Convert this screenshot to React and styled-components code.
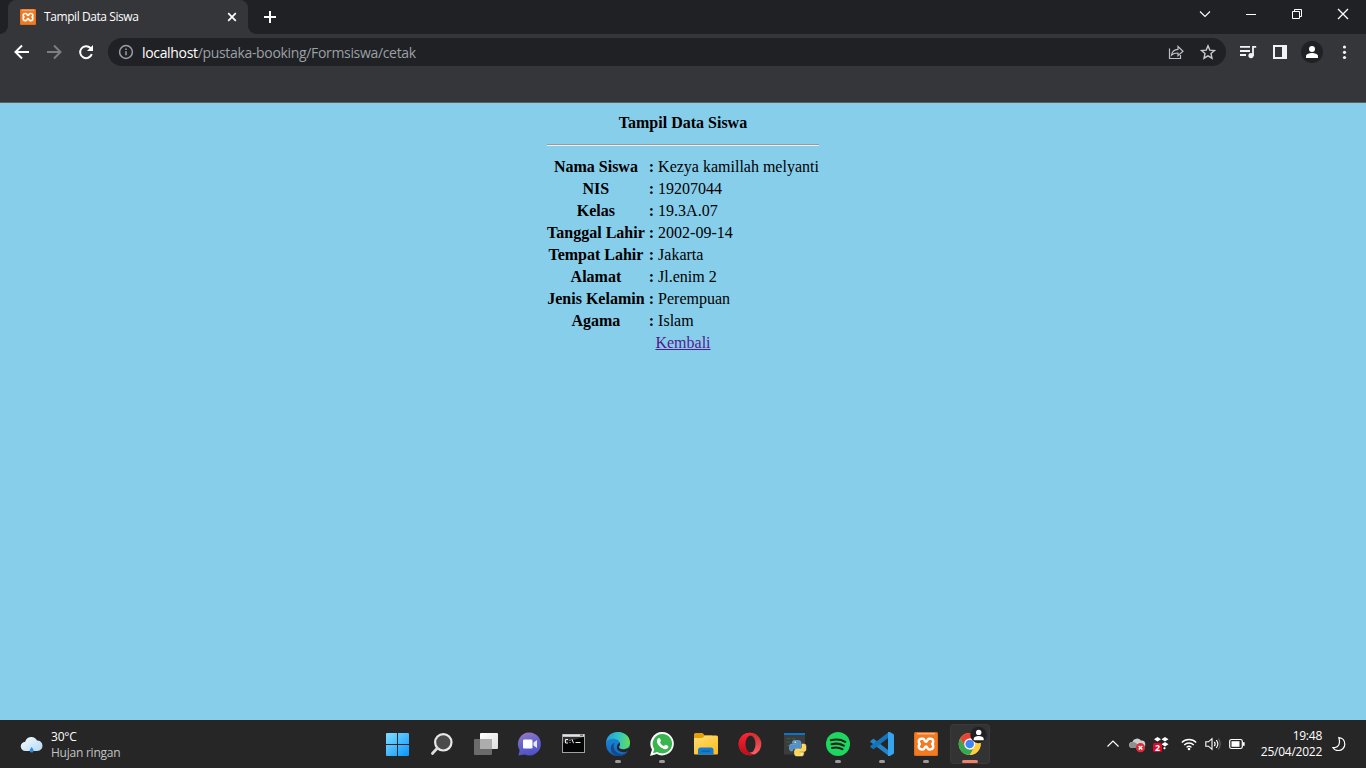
import React from "react";
import styled, { createGlobalStyle } from "styled-components";

const Global = createGlobalStyle`
  *, *::before, *::after { box-sizing: border-box; }
  html, body, #root { height: 100%; }
  body { margin: 0; overflow: hidden; }
  svg { display: block; flex: none; overflow: visible; }
`;

const ui = `"Open Sans", "Noto Sans", sans-serif`;

const Screen = styled.div`
  display: flex;
  flex-direction: column;
  width: 1366px;
  height: 768px;
  font-family: ${ui};
`;

/* ---------- browser chrome ---------- */

const TabStrip = styled.header`
  display: flex;
  align-items: stretch;
  height: 34px;
  padding-left: 8px;
  background: #202124;
`;

const Tab = styled.div`
  position: relative;
  display: flex;
  align-items: center;
  width: 240px;
  padding: 0 10px 0 12px;
  background: #35363a;
  border-radius: 8px 8px 0 0;
  color: #fff;

  &::before, &::after {
    content: "";
    position: absolute;
    bottom: 0;
    width: 8px;
    height: 8px;
  }
  &::before {
    left: -8px;
    background: radial-gradient(circle at 0 0, transparent 7.5px, #35363a 8.2px);
  }
  &::after {
    right: -8px;
    background: radial-gradient(circle at 100% 0, transparent 7.5px, #35363a 8.2px);
  }
`;

const TabTitle = styled.span`
  flex: 1;
  margin-left: 8px;
  font-size: 12px;
  line-height: 16px;
  letter-spacing: -0.42px;
  white-space: nowrap;
`;

const NewTab = styled.div`
  display: flex;
  align-items: center;
  margin-left: 14px;
`;

const WindowControls = styled.div`
  display: flex;
  align-items: flex-start;
  gap: 30px;
  margin-left: auto;
  padding: 6px 15px 0 0;
`;

const Toolbar = styled.div`
  display: flex;
  align-items: flex-start;
  height: 69px;
  padding: 4px 11px 0 12px;
  background: #35363a;
  border-bottom: 1px solid #5c5d60;
`;

const ToolGroup = styled.div`
  display: flex;
  align-items: center;
  height: 28px;
  gap: ${(p) => p.$gap}px;
`;

const AddressBar = styled.div`
  display: flex;
  align-items: center;
  width: 1118px;
  height: 28px;
  margin: 0 12px;
  padding: 0 8px 0 10px;
  border-radius: 14px;
  background: #202124;
`;

const Url = styled.span`
  flex: 1;
  margin-left: 8px;
  padding-top: 1px;
  font-size: 14px;
  line-height: 20px;
  letter-spacing: -0.33px;
  white-space: nowrap;
  color: #9aa0a6;
`;

const Host = styled.span`
  color: #fff;
`;

const Avatar = styled.div`
  display: grid;
  place-items: center;
  width: 22px;
  height: 22px;
  margin: 0 -1px;
  border-radius: 50%;
  background: #202124;
`;

/* ---------- web page ---------- */

const Page = styled.main`
  flex: 1;
  padding: 8px;
  background: #87ceeb;
  color: #000;
  font-family: "Liberation Serif", serif;
  font-size: 16px;
  line-height: 18px;
`;

const DataTable = styled.table`
  margin: 0 auto;
  border-spacing: 2px;

  th, td { padding: 1px; }
  td { text-align: left; }
`;

const Rule = styled.hr`
  margin: 8px 0;
  border: 0;
  border-top: 1px solid #9a9a9a;
  border-bottom: 1px solid #eeeeee;
`;

const BackCell = styled.td`
  && { text-align: center; }
`;

const BackLink = styled.a`
  color: #551a8b;
  text-decoration: underline;
`;

/* ---------- taskbar ---------- */

const Taskbar = styled.footer`
  display: flex;
  align-items: stretch;
  height: 48px;
  background: #262626;
  color: #fff;
  font-size: 12px;
  line-height: 16px;
`;

const Weather = styled.div`
  display: flex;
  align-items: center;
  gap: 8px;
  width: 378px;
  padding: 1px 0 0 20px;
`;

const WeatherText = styled.div`
  letter-spacing: ${(p) => p.$track || "0"};
  color: ${(p) => (p.$dim ? "#c4c4c4" : "#fff")};
`;

const Apps = styled.div`
  display: flex;
  align-items: center;
  gap: 4px;
`;

const AppTile = styled.div`
  position: relative;
  width: 40px;
  height: 40px;
  border-radius: 4px;
  background: ${(p) => (p.$active ? "#333333" : "transparent")};
  box-shadow: ${(p) => (p.$active ? "inset 0 0 0 1px #3a3a3a" : "none")};
`;

const Indicator = styled.span`
  position: absolute;
  left: 50%;
  bottom: 1px;
  width: ${(p) => (p.$active ? 16 : 6)}px;
  height: 3px;
  border-radius: 2px;
  background: ${(p) => (p.$active ? "#f28066" : "#9b9b9b")};
  transform: translateX(-50%);
`;

const Tray = styled.div`
  display: flex;
  align-items: center;
  gap: 12px;
  margin-left: auto;
  padding-right: 20px;
`;

const TrayGroup = styled.div`
  display: flex;
  align-items: center;
  gap: 8px;
`;

const Clock = styled.div`
  width: 69px;
  margin: 0 2px 0 0;
  text-align: right;
  white-space: nowrap;
  letter-spacing: -0.25px;
`;

/* ---------- icons ---------- */

const XamppMark = ({ size = 24, x, y }) => (
  <svg width={size} height={size} x={x} y={y} viewBox="0 0 24 24">
    <rect width="24" height="24" rx="1.5" fill="#e06a1a" />
    <rect x="1" y="1" width="22" height="22" rx="1" fill="#f17b22" />
    <rect x="3" y="1" width="18" height="1.4" fill="#f8b98a" />
    <path
      d="M7.500 6.800h1.500c1.800 0 1.500 3 3 3s1.200-3 3-3h1.500c3 0 3.600 3.600 1.600 5.200 2 1.600 1.400 5.400-1.600 5.400h-1.500c-1.800 0-1.500-3-3-3s-1.200 3-3 3h-1.500c-3 0-3.600-3.800-1.600-5.400-2-1.600-1.400-5.200 1.600-5.200z"
      fill="none" stroke="#fff" strokeWidth="2.500" strokeLinejoin="round"
    />
  </svg>
);

const Person = ({ size }) => (
  <svg width={size} height={size} viewBox="0 0 12 12" fill="#fff">
    <circle cx="6" cy="3" r="3" />
    <path d="M0 12V10c0-2 3.500-3 6-3s6 1 6 3v2z" />
  </svg>
);

const art = {
  windows: (
    <>
      <defs>
        <linearGradient id="win" x1="8" y1="8" x2="31" y2="32" gradientUnits="userSpaceOnUse">
          <stop stopColor="#84e0ff" /><stop offset="1" stopColor="#0a95ff" />
        </linearGradient>
      </defs>
      <path fill="url(#win)" d="M9 9h10v11H8V10a1 1 0 0 1 1-1zM20 9h10a1 1 0 0 1 1 1v10H20zM8 21h11v11H9a1 1 0 0 1-1-1zM20 21h11v10a1 1 0 0 1-1 1H20z" />
    </>
  ),
  search: (
    <>
      <circle cx="21.300" cy="18.300" r="8.200" fill="#4b4b4b" stroke="#e9e9e9" strokeWidth="2.200" />
      <path d="M15 24.500l-4.600 5" stroke="#dcdcdc" strokeWidth="2.700" strokeLinecap="round" />
    </>
  ),
  tasks: (
    <>
      <defs>
        <linearGradient id="tv" x1="0" y1="0" x2="1" y2="1"><stop stopColor="#fff" /><stop offset="1" stopColor="#dedede" /></linearGradient>
      </defs>
      <rect x="14" y="9" width="18" height="16" rx="1" fill="url(#tv)" />
      <rect x="8" y="15" width="18" height="16" rx="1" fill="#6b6b6b" />
      <rect x="14" y="15" width="12" height="10" fill="#adadad" />
    </>
  ),
  chat: (
    <>
      <defs>
        <linearGradient id="ch" x1=".2" y1="0" x2=".5" y2="1"><stop stopColor="#9a78bd" /><stop offset=".5" stopColor="#6563cd" /><stop offset="1" stopColor="#4f52c8" /></linearGradient>
      </defs>
      <path fill="url(#ch)" d="M19.500 8.500a11.500 11.500 0 1 1-4.800 22L8.400 31.500l1.300-5.300A11.500 11.500 0 0 1 19.500 8.500z" />
      <rect x="13" y="15.500" width="9.500" height="9" rx="1.300" fill="#fff" />
      <path fill="#e8e7fc" d="M23.500 18.500l3.500-2.500v8l-3.500-2.500z" />
    </>
  ),
  cmd: (
    <>
      <rect x="8" y="10" width="23" height="19" fill="#9da3a6" />
      <rect x="9" y="10.500" width="21" height="2" fill="#e0e4e7" />
      <path d="M26 10.500h3v1.500h-3z" fill="#777" />
      <rect x="9" y="13" width="21" height="15" fill="#050505" />
      <path d="M9 13h21l-21 6z" fill="#303030" />
      <path d="M14 15.500h-2.500v3.500H14M16 15.800v.8M16 18.200v.8M18 15.200l1.500 4M21.500 18.500h5" fill="none" stroke="#eee" />
    </>
  ),
  edge: (
    <>
      <defs>
        <linearGradient id="ed1" x1="8" y1="16" x2="32" y2="18" gradientUnits="userSpaceOnUse"><stop stopColor="#239ddc" /><stop offset=".5" stopColor="#2fc3c7" /><stop offset="1" stopColor="#67e04f" /></linearGradient>
        <linearGradient id="ed2" x1="0" y1="0" x2="0" y2="1"><stop stopColor="#1c8ddd" /><stop offset="1" stopColor="#1667ba" /></linearGradient>
      </defs>
      <circle cx="20" cy="20" r="12" fill="url(#ed2)" />
      <path fill="url(#ed1)" d="M8.200 18C9 11.500 14 8 20 8c7.400 0 12 5.200 12 10.500 0 4.500-3.300 6.500-6.500 6.500-3.300 0-4.500-1-4.500-1.800 0-.9 1-1.300 1-3.200 0-3-3-5.200-6.500-5.200-3 0-5.700 1.200-7.300 3.200z" />
      <path fill="#114a91" d="M16.500 18.500c-2 3.500-.5 7.500 2.200 9.800 2.800 2.300 7 2.300 10.600.1C27 31 23.500 32 20.500 32c-5.500-.5-8-4.500-7.600-8 .1-2.500 1.500-4.500 3.600-5.500z" />
      <path fill="#262626" d="M21.800 18.500c1 2-.8 3.500-.8 4.700 0 1.200 2 2.200 4.700 2.200 2 0 3.800-.6 5.800-1.800-.3 1.500-.8 2.500-1.500 3.300-2.700 1.700-7 1.600-9.300-.1-2.700-2-2.200-6.400 1.100-8.300z" />
    </>
  ),
  whatsapp: (
    <>
      <path fill="#fff" d="M20.500 8a11.700 11.700 0 1 1-5.700 22.100L8 32l2-6.500A11.700 11.700 0 0 1 20.500 8z" />
      <path fill="#39b54e" d="M20.500 10a9.700 9.700 0 1 1-5.300 17.900L11 29.200l1.300-4.200A9.700 9.700 0 0 1 20.500 10z" />
      <path fill="#fff" d="M16.300 14.300c.6-.6 1.400-.5 1.700.2l.9 2c.2.6-.9 1.500-.8 1.900.8 1.700 2.100 2.900 3.800 3.600.5.100 1.300-1.400 1.900-1.200l2.100 1c.9.500.4 2.200-.5 2.800-1.500 1-3.200.6-5-.3-2.600-1.300-4.200-3.200-5.100-5.300-.7-1.700-.3-3.500 1-4.700z" />
    </>
  ),
  folder: (
    <>
      <defs>
        <linearGradient id="fo" x1="0" y1="0" x2=".7" y2="1"><stop stopColor="#ffdf75" /><stop offset="1" stopColor="#fdbd22" /></linearGradient>
      </defs>
      <path fill="#e1a00b" d="M9.500 9h7l2.500 2.500h7V15H8v-4.500A1.500 1.500 0 0 1 9.500 9z" />
      <path fill="url(#fo)" d="M8 14h8.500l2.500-2.500h11.500A1.500 1.500 0 0 1 32 13v16.500a1 1 0 0 1-1 1H9a1 1 0 0 1-1-1z" />
      <path fill="#137bd2" d="M12 30.500v-4.500a2.500 2.500 0 0 1 2.500-2.500h10.500a2.500 2.500 0 0 1 2.500 2.500v4.500z" />
      <path fill="#0a61ac" d="M15.500 26.500h8.500v1.300h-8.500z" />
    </>
  ),
  opera: (
    <>
      <defs>
        <linearGradient id="op" x1="0" y1="0" x2="0" y2="1"><stop stopColor="#ff2634" /><stop offset="1" stopColor="#b90d19" /></linearGradient>
        <linearGradient id="op2" x1="0" y1="0" x2="0" y2="1"><stop stopColor="#cc2b2b" /><stop offset="1" stopColor="#ff6268" /></linearGradient>
      </defs>
      <circle cx="20" cy="20" r="11.300" fill="url(#op2)" />
      <path fill="url(#op)" d="M20 8.700a11.300 11.300 0 1 0 6 20.800c-2 1-5 .7-7-1.800-2.700-3.200-2.700-12 0-15.300 2-2.500 5-2.700 7-1.700A11 11 0 0 0 20 8.700z" />
      <ellipse cx="20.500" cy="20" rx="5" ry="8.600" fill="#262626" />
    </>
  ),
  python: (
    <>
      <rect x="10" y="9" width="21" height="21.500" fill="#3c3c3d" />
      <rect x="10" y="9" width="21" height="2" fill="#0876d0" />
      <path d="M12.500 14.500h4M18 14.500h3M12.500 18h4M12.500 21.500h3" stroke="#35603a" strokeWidth="1.200" />
      <path fill="#4f91c9" stroke="#91b9da" strokeWidth=".5" d="M20.500 16.500h4a2.500 2.500 0 0 1 2.500 2.500v3.500a2 2 0 0 1-2 2h-4.500a2 2 0 0 0-2 2v.500h-1.500a2 2 0 0 1-1.500-2v-3a2 2 0 0 1 2-2h5v-.8h-4V18a1.500 1.500 0 0 1 2-1.500z" />
      <path fill="#ffd751" stroke="#f4e8af" strokeWidth=".5" d="M28 20h2a2 2 0 0 1 2 2v3.500a2 2 0 0 1-2 2h-4.500v.8h4V30a1.800 1.800 0 0 1-2 2h-4.500A2.200 2.200 0 0 1 20.500 30v-3a2 2 0 0 1 2-2h3.500a2 2 0 0 0 2-2z" />
      <circle cx="21.200" cy="18.300" r=".7" fill="#fff" /><circle cx="27.300" cy="30" r=".7" fill="#fff" />
    </>
  ),
  spotify: (
    <>
      <circle cx="20" cy="20" r="12" fill="#1ed760" />
      <path d="M12.800 16.300c5-1.400 10.200-.9 14.500 1.500M13.500 20.300c4.300-1.200 8.700-.7 12.300 1.400M14 24c3.800-1 7.200-.6 10.400 1.200" fill="none" stroke="#17251b" strokeLinecap="round" strokeWidth="2.100" />
    </>
  ),
  vscode: (
    <>
      <path fill="#2385c8" d="M9 16.500l2-1.600c.3-.2.600-.2.900 0L28 27.500v4.300c-.6.200-1.300.1-1.800-.4L8.400 18c-.4-.5-.2-1 .6-1.500z" />
      <path fill="#1673b7" d="M9 23.500l2 1.600c.3.200.6.200.9 0L28 12.500V8.200c-.6-.2-1.300-.1-1.800.4L8.400 22c-.4.500-.2 1 .6 1.500z" />
      <path fill="#35a5ee" d="M26 8.200c.5-.4 1.200-.4 1.800-.1l3.500 1.800c.5.300.7.700.7 1.300v17.600c0 .600-.200 1-.700 1.300l-3.500 1.800c-.6.300-1.300.3-1.800-.1V26z" />
    </>
  ),
  xampp: <XamppMark x={8} y={8} />,
  chrome: (
    <>
      <circle cx="19.700" cy="20" r="11" fill="#ffcd3e" />
      <path fill="#e94235" d="M10.200 14.500A11 11 0 0 1 29.200 14.500h-9.500l-4.800 8.300z" />
      <path fill="#34a853" d="M10.200 14.500l4.800 8.300 4.700 2.700h4.800L19.700 31A11 11 0 0 1 10.200 14.500z" />
      <path fill="#ffcd3e" d="M19.700 14.500h9.500A11 11 0 0 1 19.700 31l4.800-8.200z" />
      <circle cx="19.700" cy="20" r="5.500" fill="#fff" />
      <circle cx="19.700" cy="20" r="4.300" fill="#4285f4" />
      <circle cx="28.500" cy="11" r="8.200" fill="#202124" />
      <circle cx="28.700" cy="8.400" r="2.700" fill="#fff" />
      <path fill="#fff" d="M23.700 16.300v-1.600c0-1.800 2.500-2.700 5-2.700s5 .9 5 2.700v1.600z" />
    </>
  ),
};

const apps = [
  ["windows"], ["search"], ["tasks"], ["chat"], ["cmd"],
  ["edge", "open"], ["whatsapp", "open"], ["folder"], ["opera"], ["python"],
  ["spotify", "open"], ["vscode", "open"], ["xampp", "open"], ["chrome", "active"],
];

const AppButton = ({ name, state }) => (
  <AppTile $active={state === "active"}>
    <svg width="40" height="40" viewBox="0 0 40 40">{art[name]}</svg>
    {state && <Indicator $active={state === "active"} />}
  </AppTile>
);

const rows = [
  ["Nama Siswa", "Kezya kamillah melyanti"],
  ["NIS", "19207044"],
  ["Kelas", "19.3A.07"],
  ["Tanggal Lahir", "2002-09-14"],
  ["Tempat Lahir", "Jakarta"],
  ["Alamat", "Jl.enim 2"],
  ["Jenis Kelamin", "Perempuan"],
  ["Agama", "Islam"],
];

const Line = ({ w = 16, h = 16, sw = 1, stroke = "#fff", children }) => (
  <svg width={w} height={h} viewBox={`0 0 ${w} ${h}`} fill="none" stroke={stroke} strokeWidth={sw}>{children}</svg>
);

export default function App() {
  return (
    <Screen>
      <Global />
      <TabStrip>
        <Tab>
          <XamppMark size={16} />
          <TabTitle>Tampil Data Siswa</TabTitle>
          <Line w={12} h={12} sw={1.7}><path d="M2.200 2.200l7.600 7.600M9.800 2.200L2.200 9.800" /></Line>
        </Tab>
        <NewTab><Line sw={2}><path d="M8 2v12M2 8h12" /></Line></NewTab>
        <WindowControls>
          <Line sw={1.100}><path d="M3 5.500l5 5 5-5" /></Line>
          <Line><path d="M3 8.500h10" /></Line>
          <Line><path d="M3.500 5.500h7v7h-7zM5.500 5.500v-2h7v7h-2" /></Line>
          <Line sw={1.300}><path d="M3 3l10 10M13 3L3 13" /></Line>
        </WindowControls>
      </TabStrip>
      <Toolbar>
        <ToolGroup $gap={12}>
          <Line w={20} h={20} sw={2}><path d="M17 10H4M10 3.500L3.500 10l6.500 6.500" /></Line>
          <Line w={20} h={20} sw={2} stroke="#7d7e80"><path d="M3 10h13M10 3.500l6.500 6.500-6.500 6.500" /></Line>
          <Line w={20} h={20} sw={2}><path d="M15.800 12.200A6 6 0 1 1 14.500 6l.8.8" /><path d="M17 3v6h-6z" fill="#fff" stroke="none" /></Line>
        </ToolGroup>
        <AddressBar>
          <Line sw={1.500} stroke="#9aa0a6"><circle cx="8" cy="8" r="6.400" /><path d="M8 7.200v4M8 4.500v1.500" /></Line>
          <Url><Host>localhost</Host>/pustaka-booking/Formsiswa/cetak</Url>
          <ToolGroup $gap={12}>
            <Line w={20} h={20} sw={1.200} stroke="#bdc1c6">
              <path d="M3.500 6.500v10h11V13" />
              <path d="M5.500 13c.6-4 3-5.500 6.500-5.700V4.500l5 4.700-5 4.500V11c-2.700 0-4.800.300-6.500 2z" />
            </Line>
            <Line w={20} h={20} sw={1.400} stroke="#c8cbcf"><path d="M10 3.800l1.800 4.300 4.700.4-3.500 3.100 1 4.600-4-2.400-4 2.400 1-4.600-3.500-3.100 4.700-.400z" /></Line>
          </ToolGroup>
        </AddressBar>
        <ToolGroup $gap={12}>
          <Line w={20} h={20} sw={1.800} stroke="#f1f3f4">
            <path d="M2 4.900h10M2 9h10M2 13h6M15 14V4.900h3.200" />
            <circle cx="13" cy="13.600" r="2.600" fill="#f1f3f4" stroke="none" />
          </Line>
          <Line w={20} h={20} sw={2} stroke="#f1f3f4"><path d="M4 4h12v12H4z" /><path d="M13 4h3v12h-3z" fill="#f1f3f4" /></Line>
          <Avatar><Person size={12} /></Avatar>
          <Line w={20} h={20}><g fill="#f1f3f4" stroke="none"><circle cx="10.500" cy="5" r="1.600" /><circle cx="10.500" cy="10.300" r="1.600" /><circle cx="10.500" cy="15.500" r="1.600" /></g></Line>
        </ToolGroup>
      </Toolbar>

      <Page>
        <DataTable>
          <tbody>
            <tr><th colSpan={3}>Tampil Data Siswa</th></tr>
            <tr><td colSpan={3}><Rule /></td></tr>
            {rows.map(([label, value]) => (
              <tr key={label}><th>{label}</th><th>:</th><td>{value}</td></tr>
            ))}
            <tr><BackCell colSpan={3}><BackLink href="#">Kembali</BackLink></BackCell></tr>
          </tbody>
        </DataTable>
      </Page>

      <Taskbar>
        <Weather>
          <svg width="23" height="18" viewBox="0 0 23 18">
            <defs><linearGradient id="cl" x1="0" y1="0" x2="1" y2="1"><stop stopColor="#f5fbff" /><stop offset="1" stopColor="#b5d8f4" /></linearGradient></defs>
            <path fill="url(#cl)" d="M5.500 15a4.600 4.600 0 0 1-.3-9.200A6.300 6.300 0 0 1 17 4.500a5.200 5.200 0 0 1 .5 10.500z" />
            <path fill="#2f8ce0" d="M11.700 11c1 1.500 1.900 2.600 1.900 3.700a1.900 1.900 0 0 1-3.800 0c0-1.100.9-2.200 1.900-3.700z" />
          </svg>
          <div>
            <WeatherText $track="-0.2px">30°C</WeatherText>
            <WeatherText $dim $track="-0.24px">Hujan ringan</WeatherText>
          </div>
        </Weather>
        <Apps>
          {apps.map(([name, state]) => <AppButton key={name} name={name} state={state} />)}
        </Apps>
        <Tray>
          <TrayGroup>
            <Line sw={1.200}><path d="M2.500 10.500L8 5l5.500 5.500" /></Line>
            <svg width="16" height="16" viewBox="0 0 16 16">
              <path fill="#cfcfcf" d="M3 12a3 3 0 0 1 .3-6A5 5 0 0 1 12 4.500a3.700 3.700 0 0 1 1 7.500z" />
              <path fill="#8f8f8f" d="M3 12a3 3 0 0 1 1-6c3 0 5 3 8 6z" />
              <circle cx="11.500" cy="11.700" r="4.600" fill="#d92c38" />
              <path d="M9.700 9.900l3.600 3.600M13.300 9.900l-3.600 3.600" stroke="#fff" strokeWidth="1.400" />
            </svg>
            <svg width="16" height="16" viewBox="0 0 16 16">
              <path fill="#fff" d="M4.500 1L8 3.300 4.500 5.500 1 3.300zM12 1l3.500 2.300L12 5.500 8.500 3.300zM12 6l3.500 2.300-3.500 2.300-3.500-2.300zM10 12l1.500-1 1.500 1-1.500 1.500z" />
              <rect x="0" y="7" width="9" height="9" rx="1.500" fill="#d8092a" />
              <text x="4.500" y="14.600" textAnchor="middle" fill="#fff" fontSize="8.800" fontWeight="700">2</text>
            </svg>
          </TrayGroup>
          <TrayGroup>
            <Line sw={1.300}><path d="M.8 6.500a10.200 10.200 0 0 1 14.400 0M3.200 9a6.800 6.800 0 0 1 9.600 0M5.500 11.400a3.600 3.600 0 0 1 5 0" /><circle cx="8" cy="13" r="1.300" fill="#fff" stroke="none" /></Line>
            <Line sw={1.100}><path d="M.8 5.800h2.700L7 2.700v10.600l-3.500-3.100H.8zM9.300 5.800a3.600 3.600 0 0 1 0 4.400M11.300 4.200a6 6 0 0 1 0 7.600" /><path d="M13.300 2.700a8.200 8.200 0 0 1 0 10.600" stroke="#666" /></Line>
            <Line><rect x=".7" y="3.500" width="12.600" height="9" rx="1.800" strokeWidth="1.200" /><rect x="2.500" y="5.200" width="8" height="5.600" fill="#fff" stroke="none" /><path d="M14.800 6.200v3.600" strokeWidth="1.700" /></Line>
            <Clock>
              <div>19:48</div>
              <div>25/04/2022</div>
            </Clock>
            <Line w={14} sw={1.200}><path d="M6.800 1.500c4 .5 6 3.400 6 6.700a6.300 6.300 0 0 1-6.500 6.300c-2.300 0-4.200-1-5.300-2.800 2.900 0 5.400-1 6.200-3.800.7-2.100.3-4.300-.4-6.400z" /></Line>
          </TrayGroup>
        </Tray>
      </Taskbar>
    </Screen>
  );
}
